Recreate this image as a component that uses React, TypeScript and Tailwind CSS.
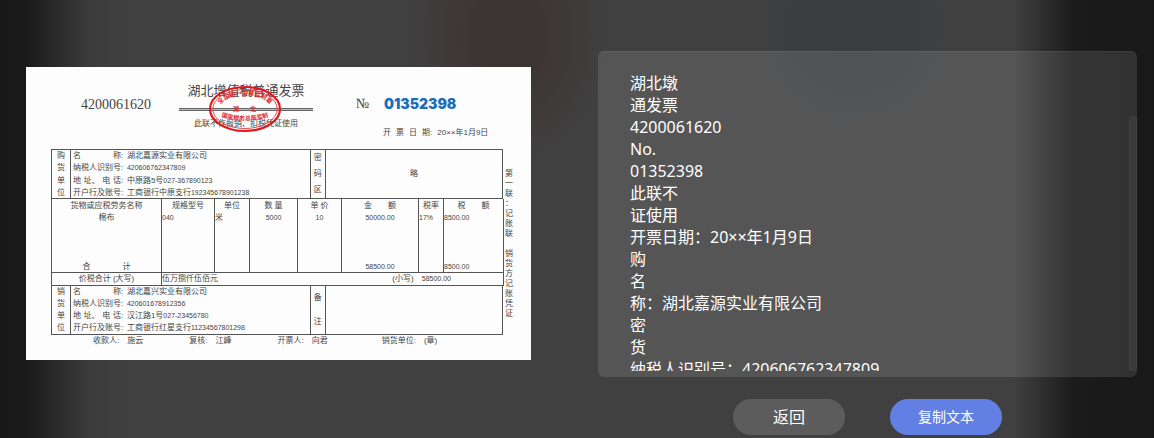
import React from 'react';

const recognized = [
  '湖北墩',
  '通发票',
  '4200061620',
  'No.',
  '01352398',
  '此联不',
  '证使用',
  '开票日期：20××年1月9日',
  '购',
  '名',
  '称：湖北嘉源实业有限公司',
  '密',
  '货',
  '纳税人识别号：420606762347809',
  '地址、电话：中原路5号027-367890123',
].join('\n');

type Party = { label: string[]; text: string; digits?: string }[];

const buyer: Party = [
  { label: ['名', '称'], text: '湖北嘉源实业有限公司' },
  { label: ['纳税人识别号'], text: '', digits: '420606762347809' },
  { label: ['地', '址、', '电', '话'], text: '中原路5号', digits: '027-367890123' },
  { label: ['开户行及账号'], text: '工商银行中原支行', digits: '192345678901238' },
];

const seller: Party = [
  { label: ['名', '称'], text: '湖北嘉兴实业有限公司' },
  { label: ['纳税人识别号'], text: '', digits: '420601678912356' },
  { label: ['地', '址、', '电', '话'], text: '汉江路1号', digits: '027-23456780' },
  { label: ['开户行及账号'], text: '工商银行红星支行', digits: '11234567801298' },
];

function PartyBlock({ side, party, note, value }: { side: string; party: Party; note: string; value?: string }) {
  return (
    <div className="grid h-[50px] grid-cols-[19fr_241fr_15fr_177fr] divide-x divide-[#555] border border-[#555]">
      <div className="flex flex-col items-center justify-between pt-px">
        {side.split('').map((c) => (
          <span key={c}>{c}</span>
        ))}
      </div>
      <div className="flex flex-col justify-between pt-px pl-0.5">
        {party.map((row) => (
          <div key={row.label.join('')} className="flex whitespace-nowrap">
            <span className="flex w-12 justify-between">
              {row.label.map((l) => (
                <span key={l}>{l}</span>
              ))}
            </span>
            <span className="w-1.5">:</span>
            <span>{row.text}</span>
            <span className="text-[7px]">{row.digits}</span>
          </div>
        ))}
      </div>
      <div className="flex flex-col items-center justify-around">
        {note.split('').map((c) => (
          <span key={c}>{c}</span>
        ))}
      </div>
      <div className="flex items-center justify-center">{value}</div>
    </div>
  );
}

function Stamp() {
  return (
    <svg
      viewBox="0 0 74 48"
      className="absolute top-[18px] left-[29px] h-12 w-[74px]"
      fill="none"
      role="img"
      aria-label="发票监制章"
    >
      <defs>
        <path id="stampTop" d="M11 24 A26 14 0 0 1 63 24" />
        <path id="stampBottom" d="M11 31 Q37 40 63 31" />
      </defs>
      <ellipse cx="37" cy="24" rx="35" ry="22" stroke="#e0181c" strokeWidth="2.2" />
      <ellipse cx="37" cy="24" rx="32.2" ry="19.5" stroke="#e4474a" strokeWidth="1" />
      <g fill="#e0282c" fontSize="6" fontWeight="700">
        <text textAnchor="middle">
          <textPath href="#stampTop" startOffset="50%">全国统一发票监制章</textPath>
        </text>
        <text x="28" y="26" textAnchor="middle">湖</text>
        <text x="45" y="26" textAnchor="middle">北</text>
        <text textAnchor="middle">
          <textPath href="#stampBottom" startOffset="50%">国家税务总局监制</textPath>
        </text>
      </g>
    </svg>
  );
}

function Invoice() {
  const head = ['货物或应税劳务名称', '规格型号', '单位', '数 量', '单 价', '金　　额', '税率', '税　　额'];
  return (
    <article className="mt-[67px] h-[293px] overflow-hidden bg-[#fdfdfd] font-['Liberation_Sans','Noto_Sans_CJK_SC',sans-serif] text-[8px] leading-[10px] text-[#444]">
      <header className="grid h-[82px] grid-cols-[153fr_134fr_218fr]">
        <div className="pt-[30px] pl-[55px] font-['Liberation_Serif',serif] text-[14px] leading-4">4200061620</div>
        <div className="relative pt-4 text-center whitespace-nowrap">
          <h1 className="text-[13px] leading-4">湖北增值税普通发票</h1>
          <div className="mt-[9px] h-[3px] border-y border-[#666] bg-[#bbb]" />
          <p className="mt-2">此联不作报销、扣税凭证使用</p>
          <Stamp />
        </div>
        <div className="pt-[29px]">
          <div className="flex items-center pl-[43px] leading-4">
            <span className="w-7 font-['Liberation_Serif',serif] text-[14px]">№</span>
            <span className="font-['Inter',sans-serif] text-[14px] font-black text-[#1a6db8]">01352398</span>
          </div>
          <div className="mt-4 flex gap-[5px] pl-[70px] whitespace-nowrap">
            <span>开</span>
            <span>票</span>
            <span>日</span>
            <span>期:</span>
            <span>20××年1月9日</span>
          </div>
        </div>
      </header>
      <div className="flex pl-[25px]">
        <div className="min-w-0 flex-1">
          <PartyBlock side="购货单位" party={buyer} note="密码区" value="略" />
          <table className="w-full table-fixed border-collapse whitespace-nowrap [&_td]:p-0 [&_th]:p-0 [&_th]:font-normal">
            <colgroup>
              <col className="w-[110px]" />
              <col className="w-[53px]" />
              <col className="w-[35px]" />
              <col className="w-[48px]" />
              <col className="w-[44px]" />
              <col className="w-[77px]" />
              <col className="w-[25px]" />
              <col className="w-[60px]" />
            </colgroup>
            <thead>
              <tr className="h-[13px]">
                {head.map((h) => (
                  <th key={h} className="border-x border-[#555]">{h}</th>
                ))}
              </tr>
            </thead>
            <tbody>
              <tr className="h-[47px] align-top [&>td]:border-x [&>td]:border-[#555] [&>td]:pt-px">
                <td className="text-center">棉布</td>
                <td className="text-[7px]">040</td>
                <td>米</td>
                <td className="text-center text-[7px]">5000</td>
                <td className="text-center text-[7px]">10</td>
                <td className="text-center text-[7px]">50000.00</td>
                <td className="text-[7px]">17%</td>
                <td className="text-[7px]">8500.00</td>
              </tr>
              <tr className="h-[13px] align-bottom [&>td]:border-x [&>td]:border-[#555]">
                <td className="text-center">合　　　　计</td>
                <td />
                <td />
                <td />
                <td />
                <td className="text-center text-[7px]">58500.00</td>
                <td />
                <td className="text-[7px]">8500.00</td>
              </tr>
              <tr className="h-[13px] [&>td]:border [&>td]:border-[#555]">
                <td className="text-center">价税合计 (大写)</td>
                <td colSpan={7}>
                  <div className="flex justify-between pr-[52px]">
                    <span>伍万捌仟伍佰元</span>
                    <span>
                      (小写) <span className="ml-1.5 text-[7px]">58500.00</span>
                    </span>
                  </div>
                </td>
              </tr>
            </tbody>
          </table>
          <div className="-mt-px">
            <PartyBlock side="销货单位" party={seller} note="备注" />
          </div>
          <footer className="flex gap-[46px] pt-px pl-[42px] whitespace-nowrap">
            <span>收款人:　施云</span>
            <span>复核:　江峰</span>
            <span>开票人:　向君</span>
            <span className="pl-2">销货单位:　(章)</span>
          </footer>
        </div>
        <aside className="w-7 pt-5 pl-0.5">
          {'第一联：记账联　销货方记账凭证'.split('').map((c, i) => (
            <span key={i} className="block h-2.5">{c}</span>
          ))}
        </aside>
      </div>
    </article>
  );
}

export default function App() {
  return (
    <main className="grid min-h-screen grid-cols-[505fr_539fr] items-start gap-[67px] bg-[radial-gradient(ellipse_100px_130px_at_44%_8%,#3d3434_30%,transparent),radial-gradient(ellipse_110px_110px_at_74%_6%,#3b3d40_30%,transparent),linear-gradient(90deg,#181818_0,#191919_25px,#3c3c3c_90px,#404040_130px,#404040_calc(100%_-_140px),#1b1b1b_calc(100%_-_80px),#181818_100%)] pr-[17px] pl-[26px] font-['Noto_Sans','Noto_Sans_CJK_SC',sans-serif] text-white">
      <Invoice />
      <section className="pt-[51px]">
        <div className="relative overflow-hidden rounded-md border-t border-white/5 bg-white/11 pb-1.5">
          <textarea
            readOnly
            aria-label="识别结果"
            defaultValue={recognized}
            className="block h-[319px] w-full resize-none bg-transparent pt-5 pr-6 pl-8 text-[16px] leading-[22px] outline-none [scrollbar-width:none]"
          />
          <div className="absolute top-16 right-0 bottom-1.5 w-2 rounded-sm border border-white/5 bg-white/4" />
        </div>
        <div className="flex justify-center gap-[45px] pt-[22px]">
          <button type="button" className="h-9 w-28 rounded-full bg-[#5c5c5c] text-[16px] leading-5">
            返回
          </button>
          <button type="button" className="h-9 w-28 rounded-full bg-[#627fe3] text-[14px] leading-5">
            复制文本
          </button>
        </div>
      </section>
    </main>
  );
}
